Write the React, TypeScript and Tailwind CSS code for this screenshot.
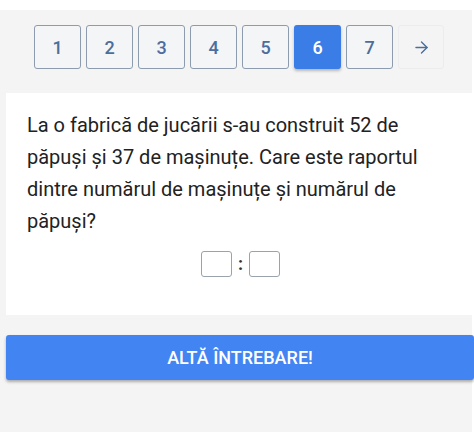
import { ArrowRight } from "lucide-react";

const PAGES = [1, 2, 3, 4, 5, 6, 7];

export default function App() {
  return (
    <div className="w-[474px] h-[434px] bg-white pt-[10px] pb-[2px] pr-[2px] font-['Roboto',sans-serif]">
      <div className="h-full bg-[#f4f4f5] flex flex-col">
        <nav className="flex gap-[5px] pl-[34px] pt-[15px]">
          {PAGES.map((p) => (
            <button
              key={p}
              className={
                p === 6
                  ? "w-[47px] h-[44px] rounded-[3px] bg-[#3b7de6] text-white text-[18px] font-medium shadow-[0_2px_3px_rgba(0,0,0,0.25)]"
                  : "w-[47px] h-[44px] rounded-[3px] border border-[#8c9cae] bg-[#f4f5f7] text-[#4b6e9c] text-[18px] font-medium"
              }
            >
              {p}
            </button>
          ))}
          <button className="w-[46px] h-[44px] rounded-[3px] border border-[#ececee] flex items-center justify-center text-[#4b6e9c]">
            <ArrowRight size={19} strokeWidth={1.75} />
          </button>
        </nav>

        <section className="mt-[24px] ml-[6px] h-[222px] bg-white pl-[21px] pr-[18px] pt-[16px]">
          <p className="text-[20px] leading-[32px] text-[#222]">
            La o fabrică de jucării s-au construit 52 de păpuși și 37 de mașinuțe. Care este raportul dintre numărul de mașinuțe și numărul de păpuși?
          </p>
          <div className="mt-[14px] flex items-center justify-center gap-[6px]">
            <div className="w-[31px] h-[26px] rounded-[3px] border border-[#9aa3ab]" />
            <span className="text-[18px] font-bold text-[#333] leading-none">:</span>
            <div className="w-[31px] h-[26px] rounded-[3px] border border-[#9aa3ab]" />
          </div>
        </section>

        <button className="mt-[20px] ml-[6px] mr-[-2px] h-[45px] rounded-[3px] bg-[#4284f2] text-white text-[18px] font-medium shadow-[0_2px_3px_rgba(0,0,0,0.3)]">
          ALTĂ ÎNTREBARE!
        </button>
      </div>
    </div>
  );
}
